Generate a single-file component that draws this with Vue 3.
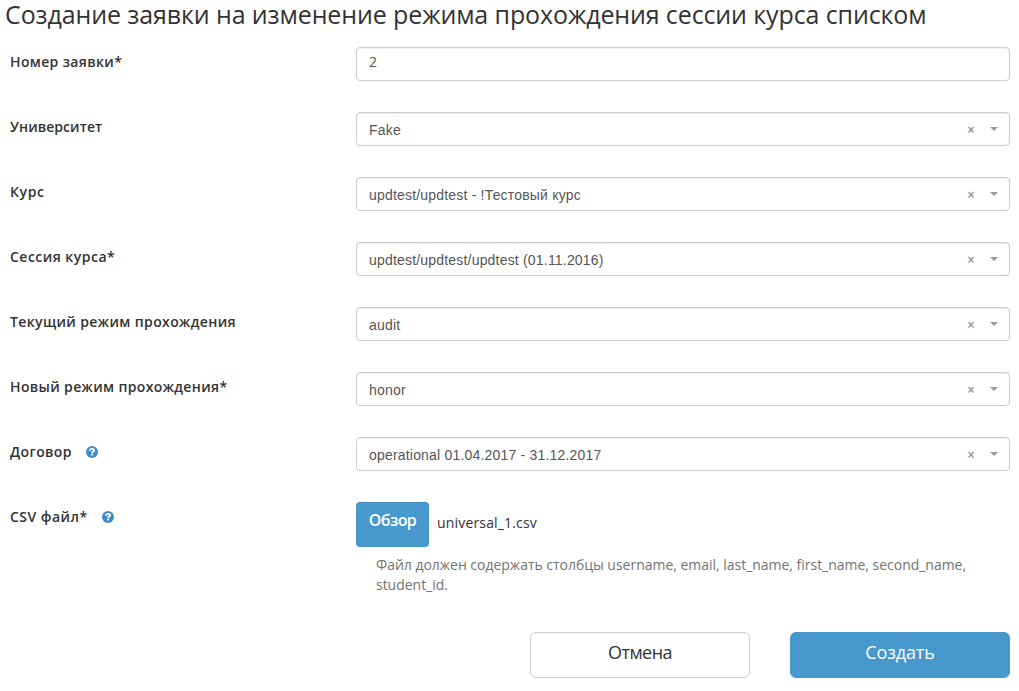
<script setup>
const fields = [
  { label: 'Номер заявки*', value: '2', spacing: 0.36, plain: true },
  { label: 'Университет', value: 'Fake', spacing: 0.06 },
  { label: 'Курс', value: 'updtest/updtest - !Тестовый курс', spacing: 0.6 },
  { label: 'Сессия курса*', value: 'updtest/updtest/updtest (01.11.2016)', spacing: 0.48 },
  { label: 'Текущий режим прохождения', value: 'audit', spacing: 0.38 },
  { label: 'Новый режим прохождения*', value: 'honor', spacing: 0.36 },
  { label: 'Договор', value: 'operational 01.04.2017 - 31.12.2017', spacing: 0.36, help: true },
]
</script>

<template>
  <main class="page">
    <h1>Создание заявки на изменение режима прохождения сессии курса списком</h1>
    <form @submit.prevent>
      <div v-for="f in fields" :key="f.label" class="row">
        <div class="label">
          <span :style="{ letterSpacing: f.spacing + 'px' }">{{ f.label }}</span>
          <svg v-if="f.help" class="help" viewBox="0 0 12 12">
            <circle cx="6" cy="6" r="6" fill="#428bca" />
            <path d="M3.8 4.6C4.1 3.3 5 2.9 6 2.9C7.3 2.9 8 3.6 8 4.4C8 5.6 6.2 5.5 6.2 7" fill="none" stroke="#fff" stroke-width="1.9" />
            <rect x="5.1" y="7.7" width="2" height="1.7" fill="#fff" />
          </svg>
        </div>
        <div v-if="f.plain" class="control plain">{{ f.value }}</div>
        <div v-else class="control">
          <span class="value">{{ f.value }}</span>
          <span class="clear">×</span>
          <span class="arrow"></span>
        </div>
      </div>
      <div class="row file-row">
        <div class="label">
          <span class="csv">CSV файл*</span>
          <svg class="help" viewBox="0 0 12 12">
            <circle cx="6" cy="6" r="6" fill="#428bca" />
            <path d="M3.8 4.6C4.1 3.3 5 2.9 6 2.9C7.3 2.9 8 3.6 8 4.4C8 5.6 6.2 5.5 6.2 7" fill="none" stroke="#fff" stroke-width="1.9" />
            <rect x="5.1" y="7.7" width="2" height="1.7" fill="#fff" />
          </svg>
        </div>
        <div class="file">
          <div class="picker">
            <button type="button" class="browse">Обзор</button>
            <span class="filename">universal_1.csv</span>
          </div>
          <p class="hint">Файл должен содержать столбцы username, email, last_name, first_name, second_name,<br>student_id.</p>
        </div>
      </div>
      <div class="actions">
        <button type="button" class="btn cancel">Отмена</button>
        <button type="submit" class="btn create">Создать</button>
      </div>
    </form>
  </main>
</template>

<style>
body { background: #fff; }
</style>

<style scoped>
* { box-sizing: border-box; }
.page {
  height: 691px;
  color: #333;
  font: 14px/20px "Open Sans", "Noto Sans", sans-serif;
}
h1 {
  margin: 0;
  height: 47px;
  padding-left: 5px;
  font-size: 25px;
  line-height: 28px;
  font-weight: 400;
  letter-spacing: -0.12px;
  white-space: nowrap;
}
.row {
  display: grid;
  grid-template-columns: 346px 654px;
  height: 65px;
  padding-left: 10px;
}
.label {
  display: flex;
  align-items: center;
  gap: 14px;
  height: 20px;
  margin-top: 5px;
  font-weight: 600;
  white-space: nowrap;
}
.csv { letter-spacing: 0.46px; }
.help { width: 12px; height: 12px; margin-top: -1px; }
.control {
  display: flex;
  align-items: center;
  height: 34px;
  padding: 2px 11px 0 12px;
  border: 1px solid #ccc;
  border-radius: 4px;
  box-shadow: inset 0 1px 1px rgba(0, 0, 0, 0.075);
  color: #555;
  font-family: "Liberation Sans", Arial, sans-serif;
}
.control.plain {
  padding-top: 0;
  padding-bottom: 4px;
  font-family: "Open Sans", "Noto Sans", sans-serif;
}
.value {
  flex: 1;
  letter-spacing: 0.19px;
}
.clear {
  width: 8px;
  margin-right: 15px;
  color: #999;
  font-size: 12px;
  font-weight: 700;
  text-align: center;
}
.arrow {
  margin-top: -3px;
  border: 4px solid transparent;
  border-top: 4px solid #999;
  border-bottom: 0;
}
.file-row { height: 130px; }
.picker { display: flex; }
.browse {
  width: 73px;
  height: 45px;
  padding: 0 0 10px;
  border: 0;
  border-radius: 4px;
  background: #4798cc;
  box-shadow: inset 0 1px 1px rgba(0, 0, 0, 0.075);
  color: #fff;
  font: 600 16px/20px "Open Sans", "Noto Sans", sans-serif;
  letter-spacing: -0.6px;
}
.filename {
  margin: 11px 0 0 8px;
  letter-spacing: 0.17px;
}
.hint {
  margin: 8px 0 0 20px;
  color: #737373;
  letter-spacing: -0.02px;
  white-space: nowrap;
}
.actions {
  display: flex;
  justify-content: flex-end;
  gap: 40px;
  padding-right: 9px;
}
.btn {
  width: 220px;
  height: 46px;
  padding: 0 0 6px;
  border: 1px solid #ccc;
  border-radius: 6px;
  background: #fff;
  color: #333;
  font: 18px/24px "Open Sans", "Noto Sans", sans-serif;
}
.cancel { letter-spacing: -0.5px; }
.create {
  border-color: #4798cc;
  background: #4798cc;
  color: #fff;
  letter-spacing: -0.15px;
}
</style>
